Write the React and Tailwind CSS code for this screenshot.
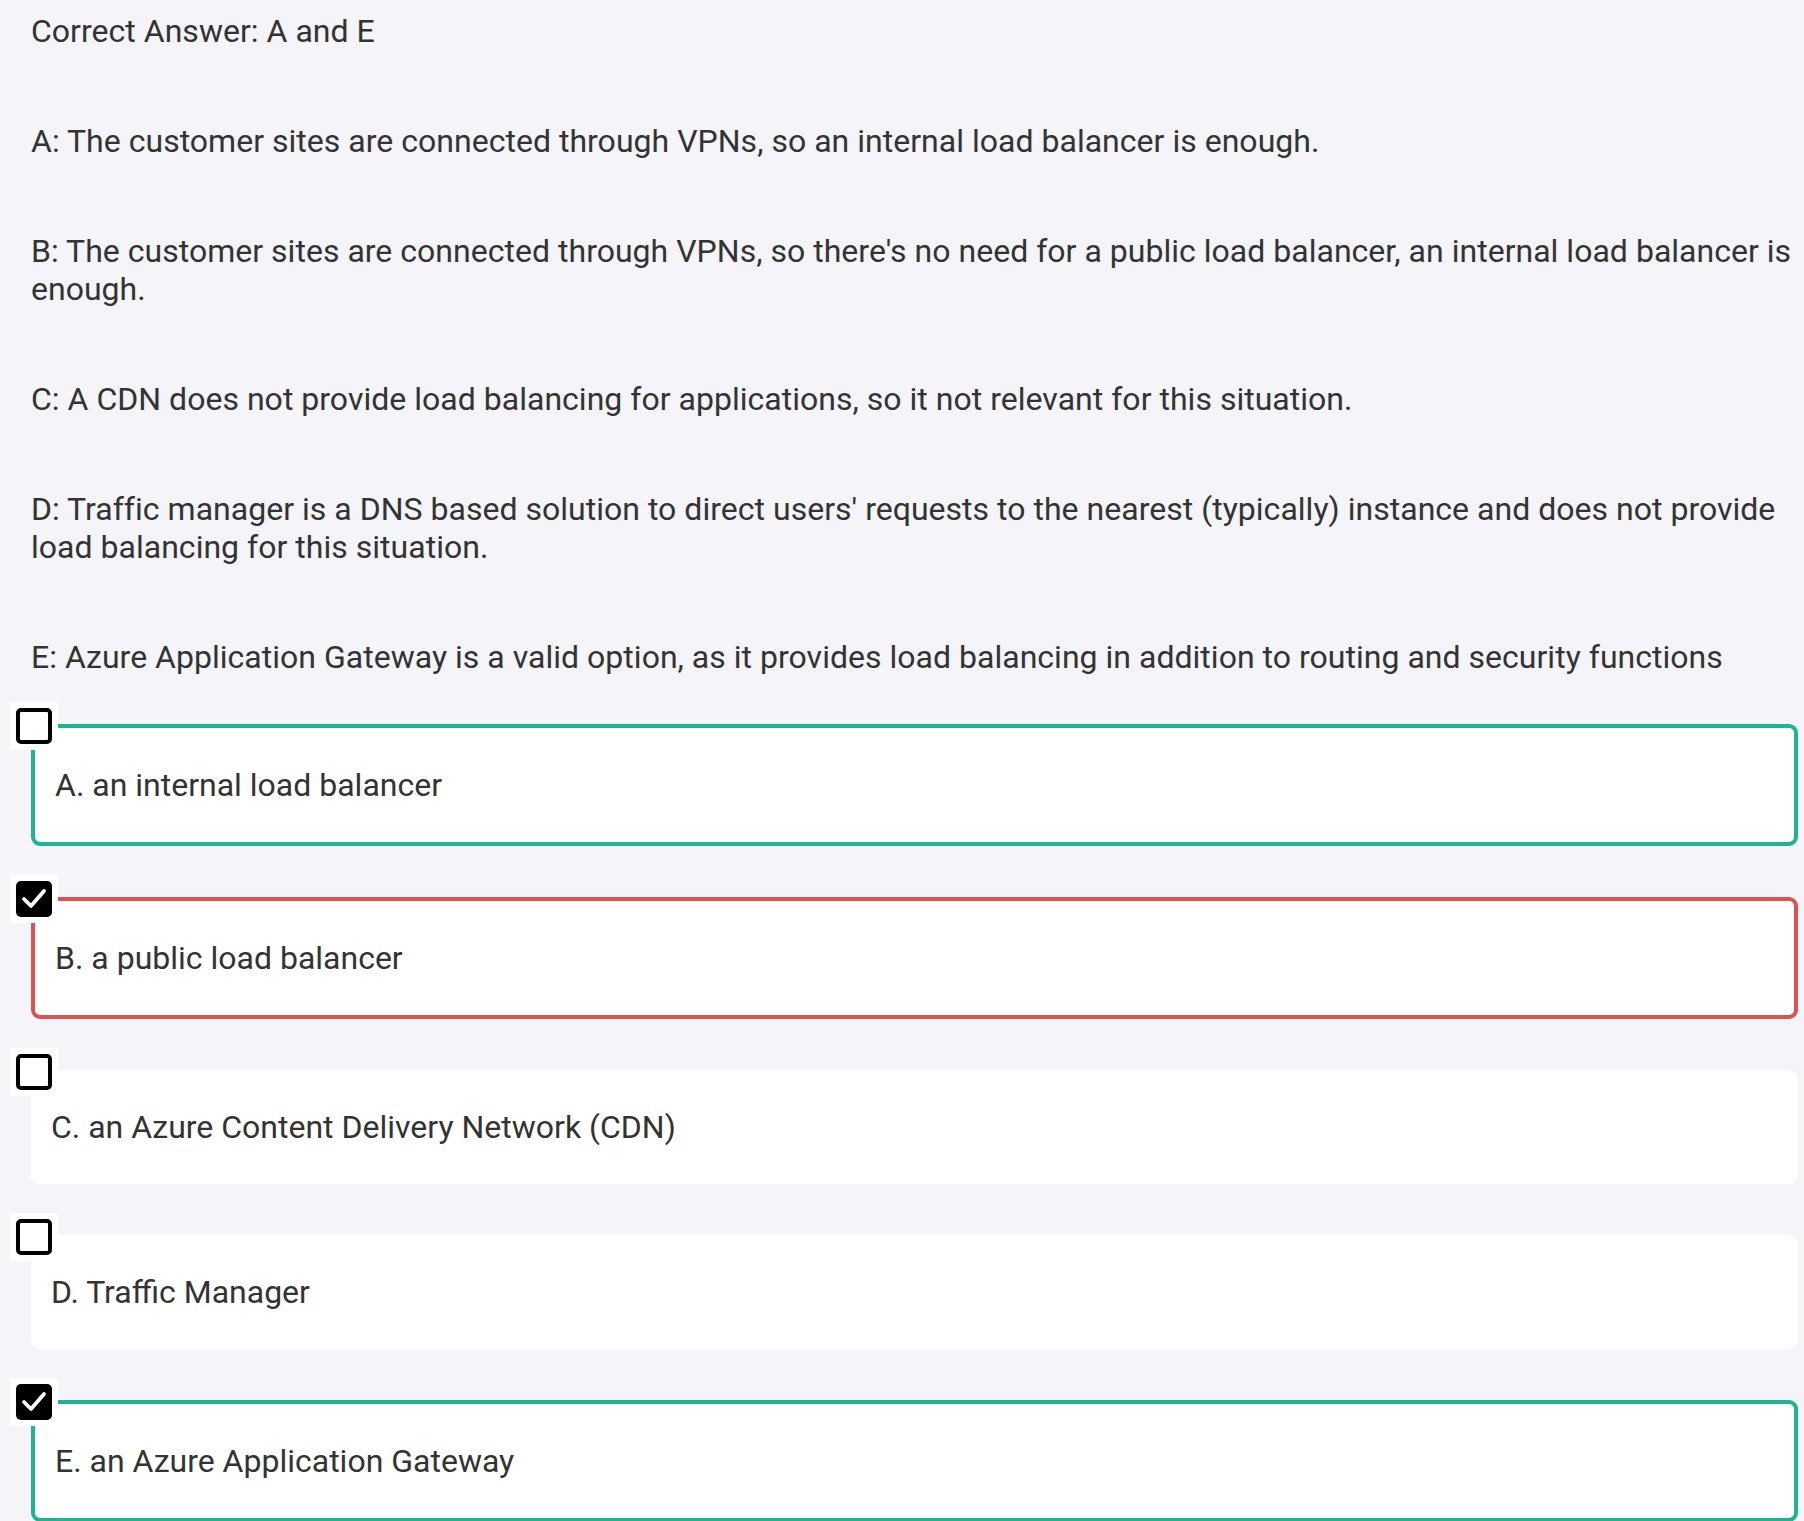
const explanations = [
  'Correct Answer: A and E',
  'A: The customer sites are connected through VPNs, so an internal load balancer is enough.',
  "B: The customer sites are connected through VPNs, so there's no need for a public load balancer, an internal load balancer is enough.",
  'C: A CDN does not provide load balancing for applications, so it not relevant for this situation.',
  "D: Traffic manager is a DNS based solution to direct users' requests to the nearest (typically) instance and does not provide load balancing for this situation.",
  'E: Azure Application Gateway is a valid option, as it provides load balancing in addition to routing and security functions',
];

const options = [
  { label: 'A. an internal load balancer', checked: false, status: 'correct' },
  { label: 'B. a public load balancer', checked: true, status: 'wrong' },
  { label: 'C. an Azure Content Delivery Network (CDN)', checked: false, status: 'none' },
  { label: 'D. Traffic Manager', checked: false, status: 'none' },
  { label: 'E. an Azure Application Gateway', checked: true, status: 'correct' },
];

const Checkbox = ({ checked, bordered }) => (
  <div
    className={`absolute z-10 flex h-[48px] w-[48px] items-center justify-center bg-white ${
      bordered ? '-left-[25px] -top-[26px]' : '-left-[21px] -top-[22px]'
    }`}
  >
    {checked ? (
      <div className="flex h-[36px] w-[36px] items-center justify-center rounded-[5px] bg-black">
        <svg viewBox="0 0 36 36" className="h-[36px] w-[36px]">
          <polyline points="8,18 15,25 28,10" fill="none" stroke="#fff" strokeWidth="3.8" strokeLinecap="round" strokeLinejoin="round" />
        </svg>
      </div>
    ) : (
      <div className="h-[36px] w-[36px] rounded-[5px] border-[4px] border-black bg-white" />
    )}
  </div>
);

const OptionCard = ({ option }) => {
  const bordered = option.status !== 'none';
  const border =
    option.status === 'correct'
      ? 'border-[4px] border-[#1fb391]'
      : option.status === 'wrong'
      ? 'border-[4px] border-[#dc5252]'
      : '';

  return (
    <div className={`relative flex items-center rounded-[9px] bg-white px-[20px] py-[38px] ${border}`}>
      <Checkbox checked={option.checked} bordered={bordered} />
      <span className="text-[32px] leading-[38px] text-[#333333]">{option.label}</span>
    </div>
  );
};

export default function App() {
  return (
    <div
      className="min-h-screen bg-[#f4f4f9] pl-[31px] pr-[6px] pt-[12px] pb-[20px]"
      style={{ fontFamily: 'Roboto, "Noto Sans", sans-serif' }}
    >
      {/* Explanation text */}
      <div className="flex flex-col gap-[72px]">
        {explanations.map((line) => (
          <p key={line} className="text-[32px] leading-[38px] tracking-[0.02px] text-[#333333]">
            {line}
          </p>
        ))}
      </div>

      {/* Answer options */}
      <div className="mt-[48px] flex flex-col gap-[51px]">
        {options.map((option) => (
          <OptionCard key={option.label} option={option} />
        ))}
      </div>
    </div>
  );
}
